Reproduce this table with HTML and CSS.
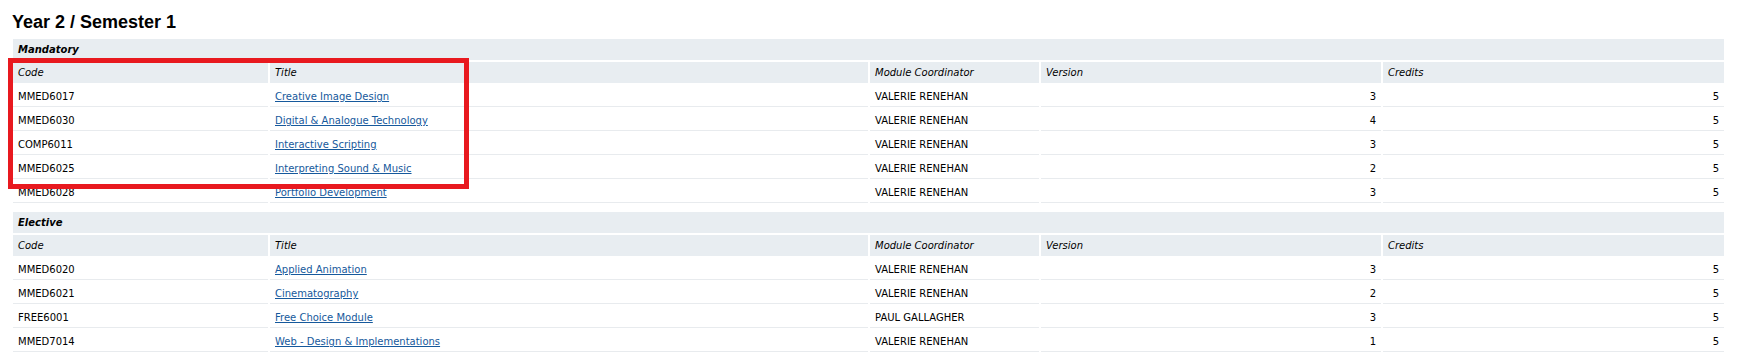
FILE: index.html
```html
<!DOCTYPE html>
<html lang="en">
<head>
<meta charset="utf-8">
<title>Year 2 / Semester 1</title>
<link rel="stylesheet" href="styles.css">
</head>
<body>
<div class="page">
  <h2 class="semester-title">Year 2 / Semester 1</h2>

  <div class="module-group">
    <table class="modules">
      <colgroup>
        <col class="c-code"><col class="c-title"><col class="c-coord"><col class="c-version"><col class="c-credits">
      </colgroup>
      <thead>
        <tr><th class="category" colspan="5">Mandatory</th></tr>
        <tr>
          <th>Code</th><th>Title</th><th>Module Coordinator</th><th>Version</th><th>Credits</th>
        </tr>
      </thead>
      <tbody>
        <tr><td>MMED6017</td><td><a href="#">Creative Image Design</a></td><td>VALERIE RENEHAN</td><td class="num">3</td><td class="num">5</td></tr>
        <tr><td>MMED6030</td><td><a href="#">Digital &amp; Analogue Technology</a></td><td>VALERIE RENEHAN</td><td class="num">4</td><td class="num">5</td></tr>
        <tr><td>COMP6011</td><td><a href="#">Interactive Scripting</a></td><td>VALERIE RENEHAN</td><td class="num">3</td><td class="num">5</td></tr>
        <tr><td>MMED6025</td><td><a href="#">Interpreting Sound &amp; Music</a></td><td>VALERIE RENEHAN</td><td class="num">2</td><td class="num">5</td></tr>
        <tr><td>MMED6028</td><td><a href="#">Portfolio Development</a></td><td>VALERIE RENEHAN</td><td class="num">3</td><td class="num">5</td></tr>
      </tbody>
    </table>
    <div class="highlight-box"></div>
  </div>

  <div class="module-group">
    <table class="modules">
      <colgroup>
        <col class="c-code"><col class="c-title"><col class="c-coord"><col class="c-version"><col class="c-credits">
      </colgroup>
      <thead>
        <tr><th class="category" colspan="5">Elective</th></tr>
        <tr>
          <th>Code</th><th>Title</th><th>Module Coordinator</th><th>Version</th><th>Credits</th>
        </tr>
      </thead>
      <tbody>
        <tr><td>MMED6020</td><td><a href="#">Applied Animation</a></td><td>VALERIE RENEHAN</td><td class="num">3</td><td class="num">5</td></tr>
        <tr><td>MMED6021</td><td><a href="#">Cinematography</a></td><td>VALERIE RENEHAN</td><td class="num">2</td><td class="num">5</td></tr>
        <tr><td>FREE6001</td><td><a href="#">Free Choice Module</a></td><td>PAUL GALLAGHER</td><td class="num">3</td><td class="num">5</td></tr>
        <tr><td>MMED7014</td><td><a href="#">Web - Design &amp; Implementations</a></td><td>VALERIE RENEHAN</td><td class="num">1</td><td class="num">5</td></tr>
      </tbody>
    </table>
  </div>
</div>
</body>
</html>
```

FILE: styles.css
```css
html, body {
  margin: 0;
  padding: 0;
  background: #ffffff;
}

.page {
  padding: 12px 0 0 11px;
  width: 1715px;
}

.semester-title {
  margin: 0 0 5px 1px;
  font-family: "Liberation Sans", Arial, sans-serif;
  font-size: 18px;
  font-weight: bold;
  line-height: 20px;
  color: #000000;
}

.module-group {
  position: relative;
  margin-bottom: 5px;
}

.modules {
  width: 1715px;
  table-layout: fixed;
  border-collapse: separate;
  border-spacing: 2px;
  font-family: "DejaVu Sans", Verdana, sans-serif;
  font-size: 10px;
  line-height: 13px;
  color: #000000;
}

.c-code { width: 255px; }
.c-title { width: 598px; }
.c-coord { width: 169px; }
.c-version { width: 340px; }
.c-credits { width: 341px; }

.modules th {
  background: #e8edf1;
  font-weight: normal;
  font-style: italic;
  text-align: left;
  padding: 4px 5px;
  white-space: nowrap;
}

.modules th.category {
  font-weight: bold;
}

.modules td {
  padding: 5px 5px 3px;
  border-bottom: 1px solid #e8ebee;
  white-space: nowrap;
}

.modules td.num {
  text-align: right;
}

.modules a {
  color: #16599c;
  text-decoration: underline;
}

.highlight-box {
  position: absolute;
  left: -3px;
  top: 21px;
  width: 451px;
  height: 121px;
  border: 5px solid #e8191f;
  pointer-events: none;
}
```
